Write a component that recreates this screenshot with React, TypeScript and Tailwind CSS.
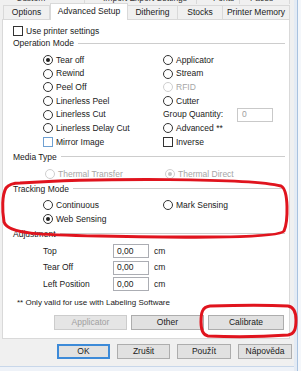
import React from 'react'

type Opt = { label: string; checked?: boolean; disabled?: boolean }

function Radio({ checked, disabled }: { checked?: boolean; disabled?: boolean }) {
  return (
    <span
      className={`flex h-[10px] w-[10px] shrink-0 items-center justify-center rounded-full border bg-white ${
        disabled ? 'border-[#cfcfcf]' : 'border-[#333333]'
      }`}
    >
      {checked && (
        <span className={`h-[4px] w-[4px] rounded-full ${disabled ? 'bg-[#c4c4c4]' : 'bg-[#1e1e1e]'}`} />
      )}
    </span>
  )
}

function RadioRow({ label, checked, disabled }: Opt) {
  return (
    <div className="flex items-center gap-[3px]">
      <Radio checked={checked} disabled={disabled} />
      <span className={disabled ? 'text-[#a6a6a6]' : ''}>{label}</span>
    </div>
  )
}

function Check({ label, focus }: { label: string; focus?: boolean }) {
  return (
    <div className="flex items-center gap-[3px]">
      <span
        className={`h-[10px] w-[10px] shrink-0 border bg-white ${focus ? 'border-[#6fa0d2]' : 'border-[#333333]'}`}
      />
      <span>{label}</span>
    </div>
  )
}

function Header({ title }: { title: string }) {
  return (
    <div className="flex h-[12px] items-center gap-[4px] pl-[10px] pr-[4px]">
      <span>{title}</span>
      <span className="flex-1 border-t border-[#cdcdcd]" />
    </div>
  )
}

function Btn({ label, disabled, w }: { label: string; disabled?: boolean; w: string }) {
  return (
    <div
      className={`flex h-full items-center justify-center border ${w} ${
        disabled ? 'border-[#cccccc] bg-[#e5e5e5] text-[#a0a0a0]' : 'border-[#adadad] bg-[#e1e1e1]'
      }`}
    >
      {label}
    </div>
  )
}

const opLeft: Opt[] = [
  { label: 'Tear off', checked: true },
  { label: 'Rewind' },
  { label: 'Peel Off' },
  { label: 'Linerless Peel' },
  { label: 'Linerless Cut' },
  { label: 'Linerless Delay Cut' },
]

const opRight: Opt[] = [{ label: 'Applicator' }, { label: 'Stream' }, { label: 'RFID', disabled: true }, { label: 'Cutter' }]

const adjust = ['Top', 'Tear Off', 'Left Position']

export default function App() {
  return (
    <div className="relative flex h-[371px] w-[301px] overflow-hidden bg-[#f0f0f0] font-['Liberation_Sans',Arial,sans-serif] text-[8.5px] leading-none text-[#1a1a1a]">
      <div className="flex w-[294px] flex-col">
        {/* cut off upper tab row */}
        <div className="flex h-[4px] overflow-hidden text-[#333]">
          <div className="-mt-[6px] flex w-full">
            <span className="w-[85px] border-r border-[#d9d9d9] pl-[16px]">Custom Commands</span>
            <span className="w-[112px] border-r border-[#d9d9d9] pl-[18px]">Import Export Settings</span>
            <span className="w-[43px] border-r border-[#d9d9d9] pl-[16px]">Fonts</span>
            <span className="w-[50px] border-r border-[#d9d9d9] pl-[10px]">Faces</span>
          </div>
        </div>

        {/* tabs */}
        <div className="flex h-[15px] items-end pl-[3px]">
          <div className="flex h-[14px] w-[47px] items-center justify-center border border-b-0 border-[#d9d9d9] bg-[#f0f0f0]">Options</div>
          <div className="relative z-10 -mb-px flex h-[17px] w-[78px] items-center justify-center border border-b-0 border-[#d9d9d9] bg-white pb-[2px]">
            Advanced Setup
          </div>
          <div className="flex h-[14px] w-[50px] items-center justify-center border border-b-0 border-l-0 border-[#d9d9d9]">Dithering</div>
          <div className="flex h-[14px] w-[45px] items-center justify-center border border-b-0 border-l-0 border-[#d9d9d9]">Stocks</div>
          <div className="flex h-[14px] w-[67px] items-center justify-center border border-b-0 border-l-0 border-[#d9d9d9]">Printer Memory</div>
        </div>

        {/* panel */}
        <div className="ml-[2px] mr-[4px] flex h-[320px] flex-col border border-[#d9d9d9] bg-white">
          <div className="mt-[5px] flex h-[12px] items-center pl-[10px]">
            <Check label="Use printer settings" />
          </div>

          <Header title="Operation Mode" />

          <div className="mt-[4px] grid grid-cols-[120px_1fr] pl-[40px]">
            <div className="flex flex-col">
              {opLeft.map((o) => (
                <div key={o.label} className="flex h-[13.7px] items-center">
                  <RadioRow {...o} />
                </div>
              ))}
              <div className="flex h-[13.7px] items-center">
                <Check label="Mirror Image" focus />
              </div>
            </div>
            <div className="flex flex-col">
              {opRight.map((o) => (
                <div key={o.label} className="flex h-[13.7px] items-center">
                  <RadioRow {...o} />
                </div>
              ))}
              <div className="flex h-[13.7px] items-center">
                <span className="w-[74px]">Group Quantity:</span>
                <div className="flex h-[14px] w-[36px] items-center border border-[#c9c9c9] pl-[4px] text-[#a0a0a0]">0</div>
              </div>
              <div className="flex h-[13.7px] items-center">
                <RadioRow label="Advanced **" />
              </div>
              <div className="flex h-[13.7px] items-center">
                <Check label="Inverse" />
              </div>
            </div>
          </div>

          <div className="mt-[2px]">
            <Header title="Media Type" />
          </div>
          <div className="mt-[4px] grid h-[14px] grid-cols-[120px_1fr] items-center pl-[42px]">
            <RadioRow label="Thermal Transfer" disabled />
            <RadioRow label="Thermal Direct" checked disabled />
          </div>

          <div className="mt-[2px]">
            <Header title="Tracking Mode" />
          </div>
          <div className="mt-[3px] grid grid-cols-[120px_1fr] pl-[40px]">
            <div className="flex h-[14px] items-center">
              <RadioRow label="Continuous" />
            </div>
            <div className="flex h-[14px] items-center">
              <RadioRow label="Mark Sensing" />
            </div>
            <div className="flex h-[14px] items-center">
              <RadioRow label="Web Sensing" checked />
            </div>
          </div>

          <div className="mt-[2px]">
            <Header title="Adjustment" />
          </div>
          <div className="mt-[3px] flex flex-col pl-[40px]">
            {adjust.map((a) => (
              <div key={a} className="flex h-[16.5px] items-center">
                <span className="w-[70px]">{a}</span>
                <div className="flex h-[14px] w-[36px] items-center border border-[#abadb3] pl-[3px]">0,00</div>
                <span className="pl-[5px]">cm</span>
              </div>
            ))}
          </div>

          <div className="mt-[4.5px] flex h-[12px] items-center pl-[14px] text-[8px]">** Only valid for use with Labeling Software</div>

          <div className="mt-[6px] flex h-[15px] gap-[4px] pl-[51px]">
            <Btn label="Applicator" disabled w="w-[73px]" />
            <Btn label="Other" w="w-[73px]" />
            <Btn label="Calibrate" w="w-[76px]" />
          </div>
        </div>

        {/* dialog buttons */}
        <div className="mt-[5px] flex h-[15px] gap-[7px] pl-[57px]">
          <div className="flex h-full w-[53px] items-center justify-center border-2 border-[#3c8ad8] bg-[#e1e1e1]">OK</div>
          <Btn label="Zrušit" w="w-[53px]" />
          <Btn label="Použít" w="w-[54px]" />
          <Btn label="Nápověda" w="w-[54px]" />
        </div>
        <div className="mt-auto h-[5px] border-t border-[#c8d7ea] bg-[#eef2f8]" />
      </div>

      {/* window right edge */}
      <div className="flex w-[7px]">
        <div className="w-[3px] bg-[#e4ebf4]" />
        <div className="w-px bg-[#a9c2df]" />
        <div className="flex-1 bg-[#f4f7fb]" />
      </div>

      {/* red annotations */}
      <svg className="pointer-events-none absolute left-0 top-0" width="301" height="371" viewBox="0 0 301 371">
        <path
          d="M 20 183 C 100 178, 250 178, 281 186 C 289 190, 288 222, 284 231 C 279 238, 200 238, 100 236 C 40 235, 8 234, 4 222 C 2 210, 2 195, 6 188 C 9 184, 14 183, 20 183 Z"
          fill="none"
          stroke="#e0141e"
          strokeWidth="3"
        />
        <path
          d="M 210 306 C 240 305, 270 305, 288 306 C 294 307, 296 312, 296 320 C 296 328, 295 334, 288 335 C 260 337, 230 337, 208 336 C 203 335, 201 331, 201 322 C 201 313, 202 307, 210 306 Z"
          fill="none"
          stroke="#e0141e"
          strokeWidth="3"
        />
      </svg>
    </div>
  )
}
